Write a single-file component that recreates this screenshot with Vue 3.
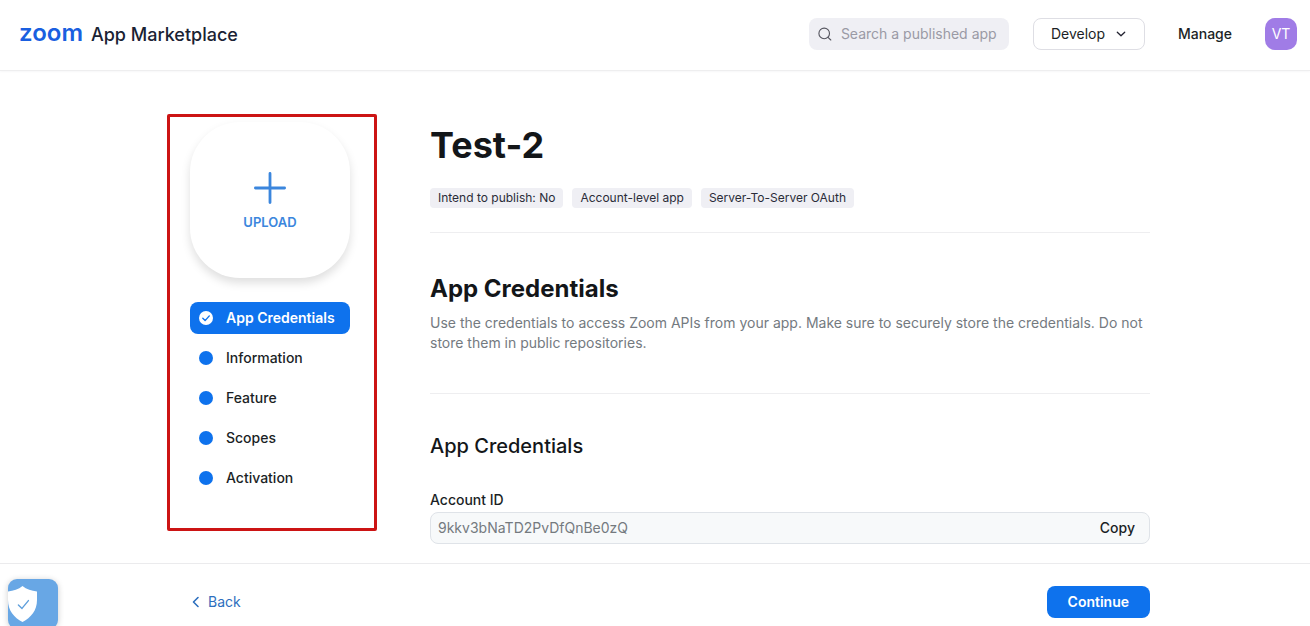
<script setup>
import { ref } from 'vue'

const steps = ['App Credentials', 'Information', 'Feature', 'Scopes', 'Activation']
const current = ref('App Credentials')
const tags = ['Intend to publish: No', 'Account-level app', 'Server-To-Server OAuth']
const accountId = ref('9kkv3bNaTD2PvDfQnBe0zQ')
const query = ref('')
</script>

<template>
  <div class="page">
    <header class="topbar">
      <a class="brand" href="#">
        <span class="brand-logo">zoom</span>
        <span class="brand-name">App Marketplace</span>
      </a>
      <div class="tools">
        <label class="search">
          <svg width="16" height="16" viewBox="0 0 16 16" fill="none" stroke="#55555f" stroke-width="1.1" stroke-linecap="round" aria-hidden="true">
            <circle cx="7.2" cy="7.4" r="5.3" />
            <path d="M11 11.3L13.8 14" />
          </svg>
          <input v-model="query" type="text" aria-label="Search a published app" placeholder="Search a published app" />
        </label>
        <button class="develop" type="button">
          Develop
          <svg width="10" height="10" viewBox="0 0 10 10" fill="none" stroke="#222230" stroke-width="1.3" stroke-linecap="round" stroke-linejoin="round" aria-hidden="true">
            <path d="M1.3 3.2L5 6.7L8.7 3.2" />
          </svg>
        </button>
        <a class="manage" href="#">Manage</a>
        <button class="avatar" type="button">VT</button>
      </div>
    </header>

    <main class="layout">
      <aside class="sidebar">
        <button class="upload" type="button">
          <svg width="32" height="32" viewBox="0 0 32 32" stroke="#3b86dd" stroke-width="2.8" stroke-linecap="round" aria-hidden="true">
            <path d="M16 1.4V30.6M1.4 16H30.6" />
          </svg>
          UPLOAD
        </button>
        <nav class="steps">
          <a
            v-for="step in steps"
            :key="step"
            href="#"
            class="step"
            :class="{ active: step === current }"
            @click.prevent="current = step"
          >
            <svg width="14" height="14" viewBox="0 0 14 14" fill="none" aria-hidden="true">
              <circle class="dot" cx="7" cy="7" r="7" />
              <path v-if="step === current" d="M3.8 7.3L6.1 9.6L10.3 4.9" stroke="#0e72ed" stroke-width="1.4" stroke-linecap="round" stroke-linejoin="round" />
            </svg>
            {{ step }}
          </a>
        </nav>
      </aside>

      <section class="content">
        <h1>Test-2</h1>
        <ul class="tags">
          <li v-for="tag in tags" :key="tag">{{ tag }}</li>
        </ul>
        <div class="intro">
          <h2>App Credentials</h2>
          <p>Use the credentials to access Zoom APIs from your app. Make sure to securely store the credentials. Do not store them in public repositories.</p>
        </div>
        <h3>App Credentials</h3>
        <label class="field-label" for="account-id">Account ID</label>
        <div class="field">
          <input id="account-id" v-model="accountId" type="text" readonly />
          <button type="button">Copy</button>
        </div>
      </section>
    </main>

    <footer class="footer">
      <div class="footer-inner">
        <a class="back" href="#">
          <svg width="12" height="12" viewBox="0 0 12 12" fill="none" stroke="#2d6fbe" stroke-width="1.6" stroke-linecap="round" stroke-linejoin="round" aria-hidden="true">
            <path d="M8 1.5L3.5 6L8 10.5" />
          </svg>
          Back
        </a>
        <button class="continue" type="button">Continue</button>
      </div>
      <button class="privacy" type="button" aria-label="Privacy settings">
        <svg width="30" height="36" viewBox="0 0 30 36" aria-hidden="true">
          <path d="M14.5 0C18.5 3.2 23.5 5 29 5.4V14C29 24.5 23 31.5 14.5 36C6 31.5 0 24.5 0 14V5.4C5.5 5 10.5 3.2 14.5 0Z" fill="#fff" />
          <path d="M10.4 19L14 22.4L20.4 14.6" fill="none" stroke="#5f9fdc" stroke-width="1.4" stroke-linecap="round" stroke-linejoin="round" />
        </svg>
      </button>
    </footer>
  </div>
</template>

<style>
body {
  margin: 0;
  background: #fff;
}
</style>

<style scoped>
.page {
  display: flex;
  flex-direction: column;
  min-height: 100vh;
  overflow: hidden;
  font-family: Inter, "Liberation Sans", sans-serif;
  font-size: 14px;
  line-height: 20px;
  color: #1b1f26;
}

.page,
.page * {
  box-sizing: border-box;
}

button,
input {
  font: inherit;
  color: inherit;
  border: 0;
  padding: 0;
  background: none;
}

button {
  cursor: pointer;
}

a {
  color: inherit;
  text-decoration: none;
}

.topbar {
  display: flex;
  align-items: center;
  justify-content: space-between;
  height: 71px;
  padding: 0 13px 2px 19px;
  border-bottom: 1px solid #eeeeef;
  box-shadow: 0 1px 2px #f7f7f8;
}

.brand {
  display: flex;
  align-items: baseline;
  gap: 8px;
  line-height: 28px;
}

.brand-logo {
  font-size: 24px;
  font-weight: 600;
  color: #1a5fe0;
}

.brand-name {
  font-size: 18px;
  font-weight: 500;
  color: #1a2233;
}

.tools {
  display: flex;
  align-items: center;
}

.search {
  display: flex;
  align-items: center;
  gap: 8px;
  width: 200px;
  height: 32px;
  padding: 0 8px;
  border-radius: 8px;
  background: #efeff4;
}

.search svg {
  flex: none;
}

.search input {
  flex: 1;
  min-width: 0;
  outline: none;
}

.search input::placeholder {
  color: #9a9aa5;
  opacity: 1;
}

.develop {
  display: flex;
  align-items: center;
  gap: 11px;
  height: 32px;
  margin-left: 24px;
  padding: 0 18px 0 17px;
  border: 1px solid #dedee4;
  border-radius: 8px;
}

.manage {
  margin: 0 33px;
  font-weight: 500;
}

.avatar {
  width: 32px;
  height: 32px;
  border-radius: 10px;
  background: #a07ce6;
  color: #fff;
}

.layout {
  flex: 1;
  display: flex;
  gap: 53px;
  width: 100%;
  max-width: 990px;
  margin: 0 auto;
  padding: 43px 0 19px 7px;
}

.sidebar {
  flex: none;
  align-self: flex-start;
  width: 210px;
  padding: 5px 20px 34px;
  border: 3px solid #cc1414;
  border-radius: 2px;
}

.upload {
  display: flex;
  flex-direction: column;
  align-items: center;
  justify-content: center;
  gap: 8px;
  width: 160px;
  height: 156px;
  padding-top: 4px;
  border-radius: 50px;
  box-shadow: 0 5px 10px rgba(0, 0, 0, 0.13);
  font-size: 13px;
  font-weight: 600;
  color: #3b86dd;
}

.steps {
  display: flex;
  flex-direction: column;
  gap: 8px;
  width: 160px;
  margin-top: 24px;
}

.step {
  display: flex;
  align-items: center;
  gap: 13px;
  height: 32px;
  padding: 0 9px;
  border-radius: 8px;
  font-weight: 500;
}

.dot {
  fill: #0e72ed;
}

.step.active {
  background: #0e72ed;
  color: #fff;
  font-weight: 600;
}

.step.active .dot {
  fill: #fff;
}

.content {
  flex: 1;
  min-width: 0;
}

h1,
h2,
h3,
p {
  margin: 0;
}

h1,
h2,
h3 {
  color: #131619;
}

h1 {
  padding-top: 7px;
  font-size: 36px;
  font-weight: 700;
  line-height: 48px;
}

.tags {
  display: flex;
  gap: 9px;
  margin: 19px 0 0;
  padding: 0 0 24px;
  border-bottom: 1px solid #eeeef0;
  list-style: none;
}

.tags li {
  padding: 0 8px;
  border-radius: 4px;
  background: #efeff4;
  font-size: 12px;
  color: #2a2c38;
}

.intro {
  padding: 40px 0;
  border-bottom: 1px solid #eeeef0;
}

h2 {
  font-size: 24px;
  font-weight: 700;
  line-height: 32px;
}

.intro p {
  padding-top: 8px;
  color: #747a7f;
}

h3 {
  margin-top: 38px;
  font-size: 20px;
  font-weight: 500;
  line-height: 28px;
}

.field-label {
  display: block;
  margin-top: 30px;
  font-weight: 500;
}

.field {
  display: flex;
  align-items: center;
  height: 32px;
  margin-top: 2px;
  padding: 0 14px 0 7px;
  border: 1px solid #dfe3e8;
  border-radius: 8px;
  background: #f7f9fa;
}

.field input {
  flex: 1;
  min-width: 0;
  outline: none;
  color: #747a7f;
}

.field button {
  font-weight: 500;
}

.footer {
  position: relative;
  height: 63px;
  border-top: 1px solid #ebebed;
}

.footer-inner {
  display: flex;
  align-items: center;
  justify-content: space-between;
  max-width: 990px;
  height: 100%;
  margin: 0 auto;
  padding: 14px 0 0 30px;
}

.back {
  display: flex;
  align-items: center;
  gap: 6px;
  color: #2d6fbe;
}

.continue {
  height: 32px;
  padding: 0 21px;
  border-radius: 8px;
  background: #0e72ed;
  color: #fff;
  font-weight: 600;
}

.privacy {
  position: absolute;
  left: 8px;
  top: 15px;
  display: flex;
  align-items: center;
  width: 50px;
  height: 50px;
  border-radius: 9px;
  background: #68a7e5;
  box-shadow: 0 1px 6px rgba(0, 0, 0, 0.2);
}
</style>
